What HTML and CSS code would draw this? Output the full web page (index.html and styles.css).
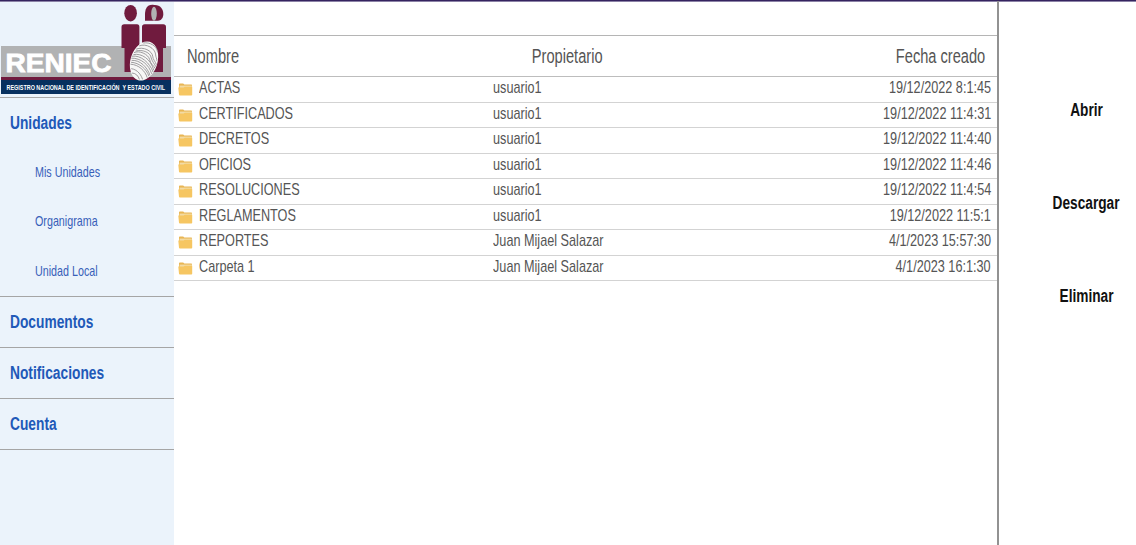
FILE: index.html
```html
<!DOCTYPE html>
<html lang="es">
<head>
<meta charset="utf-8">
<title>RENIEC</title>
<link rel="stylesheet" href="styles.css">
</head>
<body>
<svg width="0" height="0" class="defs"><defs>
  <symbol id="folder" viewBox="0 0 15 13">
    <path d="M1 1.2Q1 .4 1.8.4H5.2L6.3 1.6H13.4Q14 1.6 14 2.4V10H1Z" fill="#e9b654"/>
    <path d="M1.6 2.6H13.9V6H1.6Z" fill="#f2dba6"/>
    <path d="M.3 4.4H5.6L6.800 3.700H14.2V11.8Q14.2 12.5 13.4 12.5H1.9Q1.1 12.5 1 11.7Z" fill="#f6c662"/>
  </symbol>
</defs></svg>
<div class="app">
  <aside class="sidebar">
    <div class="brand">
      <svg class="logo" viewBox="0 0 174 95" width="174" height="95">
        <rect x="1" y="46" width="170" height="31" fill="#b1b2b3"/>
        <rect x="1" y="77" width="170" height="3.2" fill="#701b3e"/>
        <rect x="1" y="80" width="170" height="14" fill="#07305f"/>
        <g fill="#701b3e">
          <ellipse cx="130.600" cy="13.200" rx="6.300" ry="8.300"/>
          <path d="M121.500 48V27Q121.500 24.300 124.200 24.300H137Q139.400 24.300 139.400 27V72H124.500V48Z"/>
          <path d="M142 49V27Q142 24.300 144.700 24.300H163.300Q166 24.300 166 27V48H163V72H142Z"/>
          <path d="M154 5C147 4 145 9 145 15V20.700H154Z"/>
          <path d="M154 5C160 4.500 163.300 9 163.300 14C163.300 18 161 20.700 158 20.700H154Z"/>
        </g>
        <ellipse cx="154" cy="13.800" rx="2.800" ry="7" fill="#b1b2b3"/>
        <g transform="translate(144 61) rotate(17)">
          <ellipse rx="13.500" ry="20" fill="#f7f7f6"/>
          <g fill="none" stroke="#929193" stroke-width=".8">
            <path d="M-10 11C-3 10 2 15 4 18M-12 7C-4 5 4 9 8 15M-12 3C-4 0 5 5 10 12M-13 -1C-5 -5 6 0 12 8M-12 -5C-8 -9 2 -8 5 -3C7 1 10 1 13 4M-11 -9C-5 -14 5 -12 7 -7C8 -4 11 -3 13 0M-9 -13C-3 -18 7 -15 9 -10C10 -7 12 -6 12 -4M-6 -17C0 -20 8 -18 10 -13M-8 15C-4 14 -1 16 1 19M-12 5C-4 3 5 7 9 13M-13 1C-4 -2 6 2 11 10M-12 -3C-5 -7 6 -4 12 6M-11 -7C-5 -11 4 -10 6 -5C8 -2 10 -1 13 2"/>
          </g>
        </g>
        <text class="logo-name" x="5.500" y="72" textLength="106" lengthAdjust="spacingAndGlyphs">RENIEC</text>
        <text class="logo-sub" transform="translate(6.500 90) scale(.68 1)">REGISTRO NACIONAL DE IDENTIFICACIÓN&#160; Y ESTADO CIVIL</text>
      </svg>
    </div>
    <nav>
      <div class="group open">
        <a class="title"><span>Unidades</span></a>
        <a class="sub"><span>Mis Unidades</span></a>
        <a class="sub"><span>Organigrama</span></a>
        <a class="sub"><span>Unidad Local</span></a>
      </div>
      <div class="group"><a class="title"><span>Documentos</span></a></div>
      <div class="group"><a class="title"><span>Notificaciones</span></a></div>
      <div class="group"><a class="title"><span>Cuenta</span></a></div>
    </nav>
  </aside>
  <main class="files">
    <div class="head"><span>Nombre</span><span class="mid">Propietario</span><span class="end">Fecha creado</span></div>
    <div class="row"><svg class="icon"><use href="#folder"/></svg><span>ACTAS</span><span>usuario1</span><span class="end">19/12/2022 8:1:45</span></div>
    <div class="row"><svg class="icon"><use href="#folder"/></svg><span>CERTIFICADOS</span><span>usuario1</span><span class="end">19/12/2022 11:4:31</span></div>
    <div class="row"><svg class="icon"><use href="#folder"/></svg><span>DECRETOS</span><span>usuario1</span><span class="end">19/12/2022 11:4:40</span></div>
    <div class="row"><svg class="icon"><use href="#folder"/></svg><span>OFICIOS</span><span>usuario1</span><span class="end">19/12/2022 11:4:46</span></div>
    <div class="row"><svg class="icon"><use href="#folder"/></svg><span>RESOLUCIONES</span><span>usuario1</span><span class="end">19/12/2022 11:4:54</span></div>
    <div class="row"><svg class="icon"><use href="#folder"/></svg><span>REGLAMENTOS</span><span>usuario1</span><span class="end">19/12/2022 11:5:1</span></div>
    <div class="row"><svg class="icon"><use href="#folder"/></svg><span>REPORTES</span><span>Juan Mijael Salazar</span><span class="end">4/1/2023 15:57:30</span></div>
    <div class="row"><svg class="icon"><use href="#folder"/></svg><span>Carpeta 1</span><span>Juan Mijael Salazar</span><span class="end">4/1/2023 16:1:30</span></div>
  </main>
  <aside class="actions">
    <a><span>Abrir</span></a>
    <a><span>Descargar</span></a>
    <a><span>Eliminar</span></a>
  </aside>
</div>
</body>
</html>
```
FILE: styles.css
```css
* { box-sizing: border-box; }
body {
  margin: 0;
  height: 545px;
  overflow: hidden;
  background: #fff;
  font-family: "Liberation Sans", Arial, sans-serif;
}
.defs { display: block; }
.app {
  display: grid;
  grid-template-columns: 174px 825px 1fr;
  height: 545px;
  border-top: 1px solid #35245f;
  box-shadow: inset 0 1px #8b82a6;
}
span { display: inline-block; white-space: nowrap; transform-origin: left center; }

.sidebar { margin-top: 1px; background: #ebf3fb; }
.brand { height: 98px; border-bottom: 1px solid #aaa; }
.logo { display: block; margin-top: -2px; }
.logo-name { font-size: 26.5px; font-weight: bold; fill: #fff; stroke: #fff; stroke-width: .8px; }
.logo-sub { font-size: 8px; font-weight: bold; fill: #fff; }
.group { height: 51px; border-bottom: 1px solid #a5a5a5; }
.group.open { height: 199px; }
.title { display: block; height: 50px; padding-left: 10px; line-height: 51px; font-size: 18px; font-weight: bold; color: #2159b8; }
.title span { transform: scaleX(.765); }
.sub { display: block; height: 49.300px; padding-left: 35px; line-height: 49px; font-size: 14.500px; color: #385fb9; }
.sub span { transform: scaleX(.74); }

.files { padding-top: 34px; border-right: 2px solid #929292; }
.head {
  display: grid;
  grid-template-columns: 274px 1fr 274px;
  height: 42px;
  padding: 0 12px 0 13px;
  border-top: 1px solid #b5b5b5;
  border-bottom: 1px solid #bdbdbd;
  line-height: 41px;
  font-size: 19.500px;
  color: #555;
}
.head span { transform: scaleX(.75); }
.head .mid { justify-self: center; transform-origin: center; margin-right: 37px; }
.row {
  display: grid;
  grid-template-columns: 25px 293.500px 1fr 300px;
  height: 25.560px;
  padding-right: 6px;
  border-bottom: 1px solid #d3d3d3;
  line-height: 22px;
  font-size: 17px;
  color: #555;
}
.row span { transform: scaleX(.745); }
.row .end, .head .end { justify-self: end; transform-origin: right center; }
.icon { width: 15px; height: 13px; margin: 6px 0 0 4px; }

.actions { display: grid; grid-auto-rows: 93px; padding: 63px 0 0 38px; }
.actions a { display: flex; align-items: center; justify-content: center; font-size: 18px; font-weight: bold; color: #111; width: 99px; }
.actions span { transform: scaleX(.76); transform-origin: center; }
```
